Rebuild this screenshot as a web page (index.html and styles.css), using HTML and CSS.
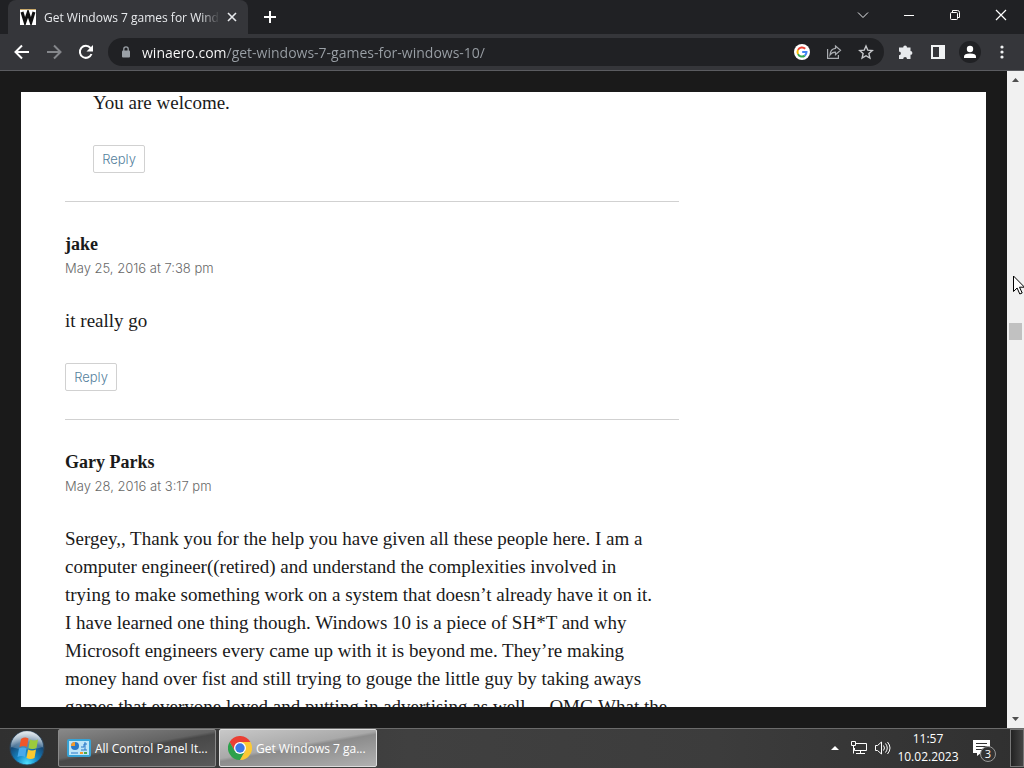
FILE: index.html
```html
<!DOCTYPE html>
<html lang="en">
<head>
    <meta charset="UTF-8">
    <meta name="viewport" content="width=device-width, initial-scale=1.0">
    <title>Get Windows 7 games for Windows 10</title>
    <link rel="stylesheet" href="styles.css">
</head>
<body>
    <!-- Tab strip -->
    <div class="tabstrip">
        <div class="tab">
            <svg class="favicon" width="16" height="16" viewBox="0 0 16 16">
                <rect width="16" height="16" fill="#fff"/>
                <path d="M2 3l3 10 3-9 3 9 3-10" fill="none" stroke="#111" stroke-width="3"/>
                <path d="M0 .5h16" stroke="#c9a96a"/>
            </svg>
            <span class="tab-title">Get Windows 7 games for Windows 10</span>
            <button class="icon-btn tab-close" aria-label="Close tab">
                <svg width="10" height="10" viewBox="0 0 10 10"><path d="M1 1l8 8M9 1l-8 8" stroke="#e8eaed" stroke-width="1.600"/></svg>
            </button>
        </div>
        <button class="icon-btn new-tab" aria-label="New tab">
            <svg width="12" height="12" viewBox="0 0 12 12"><path d="M6 0v12M0 6h12" stroke="#fff" stroke-width="2"/></svg>
        </button>
        <div class="window-controls">
            <button class="icon-btn" aria-label="Search tabs">
                <svg width="12" height="12" viewBox="0 0 12 12"><path d="M1 3.500l5 5 5-5" fill="none" stroke="#e8eaed"/></svg>
            </button>
            <button class="icon-btn" aria-label="Minimize">
                <svg width="12" height="12" viewBox="0 0 12 12"><path d="M1 6.500h10" stroke="#fff"/></svg>
            </button>
            <button class="icon-btn" aria-label="Restore">
                <svg width="12" height="12" viewBox="0 0 12 12" fill="none" stroke="#fff"><rect x="1.500" y="3.500" width="7" height="7" rx="1"/><path d="M3.500 3V1.500h5q2 0 2 2v5H9"/></svg>
            </button>
            <button class="icon-btn" aria-label="Close">
                <svg width="12" height="12" viewBox="0 0 12 12"><path d="M1 1l10 10M11 1L1 11" stroke="#fff" stroke-width="1.200"/></svg>
            </button>
        </div>
    </div>

    <!-- Toolbar -->
    <div class="toolbar">
        <div class="nav-buttons">
            <button class="icon-btn" aria-label="Back">
                <svg width="16" height="16" viewBox="0 0 16 16"><path d="M15 8H2M8 1.500L1.500 8 8 14.500" fill="none" stroke="#fff" stroke-width="2"/></svg>
            </button>
            <button class="icon-btn" aria-label="Forward">
                <svg width="16" height="16" viewBox="0 0 16 16"><path d="M1 8h13M8 1.500L14.500 8 8 14.500" fill="none" stroke="#85878b" stroke-width="2"/></svg>
            </button>
            <button class="icon-btn" aria-label="Reload">
                <svg width="16" height="16" viewBox="0 0 16 16"><path d="M13.500 10A6 6 0 1 1 12.500 4" fill="none" stroke="#fff" stroke-width="2"/><path d="M15 1v6.500H8.500z" fill="#fff"/></svg>
            </button>
        </div>
        <div class="omnibox">
            <svg width="10" height="12" viewBox="0 0 10 12"><rect x="1" y="4.500" width="8" height="7" rx="1" fill="#9aa0a6"/><path d="M2.800 5V3a2.200 2.200 0 0 1 4.400 0v2" fill="none" stroke="#9aa0a6" stroke-width="1.300"/></svg>
            <input class="url" type="text" aria-label="Address" value="winaero.com/get-windows-7-games-for-windows-10/">
            <button class="icon-btn" aria-label="Google">
                <svg width="16" height="16" viewBox="0 0 16 16" fill="none" stroke-width="2">
                    <circle cx="8" cy="8" r="8" fill="#fff"/>
                    <path d="M11.200 4.800A4.500 4.500 0 0 0 4 5.900" stroke="#ea4335"/>
                    <path d="M4 5.900a4.500 4.500 0 0 0 0 4.200" stroke="#fbbc05"/>
                    <path d="M4 10.100a4.500 4.500 0 0 0 6.800 1.500" stroke="#34a853"/>
                    <path d="M10.800 11.600A4.500 4.500 0 0 0 12.500 8H8.200" stroke="#4285f4"/>
                </svg>
            </button>
            <button class="icon-btn" aria-label="Share">
                <svg width="16" height="16" viewBox="0 0 16 16" fill="none" stroke="#a9acb0" stroke-width="1.200"><path d="M1.600 5v9.400h10.800V11M9.500 2l5 4.300-5 4.300V8.200Q6 8 4 11q.4-6 5.500-6.600z"/></svg>
            </button>
            <button class="icon-btn" aria-label="Bookmark this tab">
                <svg width="16" height="16" viewBox="0 0 16 16"><path d="M8 2l1.800 4.200 4.500.4-3.400 3 1 4.400L8 11.700 4.100 14l1-4.400-3.400-3 4.500-.4z" fill="none" stroke="#c8cacd" stroke-width="1.400"/></svg>
            </button>
        </div>
        <div class="tool-buttons">
            <button class="icon-btn" aria-label="Extensions">
                <svg width="16" height="16" viewBox="0 0 16 16"><path d="M5.200 3.500a1.900 1.900 0 0 1 3.800 0h3.500V7a1.900 1.900 0 0 1 0 3.800v4.200H9a1.900 1.900 0 0 0-3.800 0H1v-3.800a1.900 1.900 0 0 0 0-3.800V3.500z" fill="#e8eaed"/></svg>
            </button>
            <button class="icon-btn" aria-label="Side panel">
                <svg width="16" height="16" viewBox="0 0 16 16"><path d="M1 1h14v14H1zM3 3v10h6V3z" fill="#f1f3f4" fill-rule="evenodd"/></svg>
            </button>
            <button class="icon-btn" aria-label="Profile">
                <svg width="22" height="22" viewBox="0 0 22 22"><circle cx="11" cy="11" r="11" fill="#202124"/><circle cx="11" cy="8" r="3.200" fill="#fff"/><path d="M5 17v-1.500Q5 12.500 11 12.500t6 3V17z" fill="#fff"/></svg>
            </button>
            <button class="icon-btn" aria-label="Menu">
                <svg width="4" height="14" viewBox="0 0 4 14" fill="#f1f3f4"><circle cx="2" cy="2" r="1.600"/><circle cx="2" cy="7" r="1.600"/><circle cx="2" cy="12" r="1.600"/></svg>
            </button>
        </div>
    </div>

    <!-- Web page -->
    <div class="viewport">
        <main class="site">
            <div class="site-inner">
                <ol class="comment-list">
                    <li class="comment child">
                        <p>You are welcome.</p>
                        <a class="reply" href="#">Reply</a>
                    </li>
                    <li class="comment">
                        <b class="author">jake</b>
                        <a class="date" href="#">May 25, 2016 at 7:38 pm</a>
                        <p>it really go</p>
                        <a class="reply" href="#">Reply</a>
                    </li>
                    <li class="comment">
                        <b class="author">Gary Parks</b>
                        <a class="date" href="#">May 28, 2016 at 3:17 pm</a>
                        <p>Sergey,, Thank you for the help you have given all these people here. I am a<br>
                        computer engineer((retired) and understand the complexities involved in<br>
                        trying to make something work on a system that doesn’t already have it on it.<br>
                        I have learned one thing though. Windows 10 is a piece of SH*T and why<br>
                        Microsoft engineers every came up with it is beyond me. They’re making<br>
                        money hand over fist and still trying to gouge the little guy by taking aways<br>
                        games that everyone loved and putting in advertising as well… OMG What the</p>
                    </li>
                </ol>
            </div>
        </main>
        <div class="scrollbar">
            <svg width="7" height="4" viewBox="0 0 7 4"><path d="M0 4l3.500-4L7 4z" fill="#505050"/></svg>
            <div class="thumb"></div>
            <svg width="7" height="4" viewBox="0 0 7 4"><path d="M0 0l3.500 4L7 0z" fill="#505050"/></svg>
        </div>
    </div>

    <!-- Taskbar -->
    <div class="taskbar">
        <button class="start" aria-label="Start">
            <svg width="36" height="36" viewBox="0 0 36 36">
                <defs>
                    <radialGradient id="orb" cx="50%" cy="95%" r="90%">
                        <stop offset="0" stop-color="#4fe0ff"/>
                        <stop offset=".35" stop-color="#1585c4"/>
                        <stop offset=".7" stop-color="#164a78"/>
                        <stop offset="1" stop-color="#9fb4c4"/>
                    </radialGradient>
                    <linearGradient id="gloss" x2="0" y2="1">
                        <stop offset="0" stop-color="#fff" stop-opacity=".7"/>
                        <stop offset="1" stop-color="#fff" stop-opacity=".15"/>
                    </linearGradient>
                </defs>
                <circle cx="18" cy="18" r="17" fill="url(#orb)" stroke="#2b4257"/>
                <path d="M2 17a16 16 0 0 1 32 0q-16 5-32 0z" fill="url(#gloss)"/>
                <path d="M12 9q4-2.500 7.500-.5L18 17q-3.500-2-7.500 0z" fill="#f0562b"/>
                <path d="M21 9.500q4 2 8 0L27.500 18q-4 2-8 0z" fill="#9ccb3c"/>
                <path d="M10 18.500q4-2 7.500 0L16 27q-3.500-2-7.500 0z" fill="#49a9ea"/>
                <path d="M19 19.500q4 2 8 0L25.500 28q-4 2-8 0z" fill="#fdc92e"/>
            </svg>
        </button>
        <button class="task">
            <svg width="24" height="24" viewBox="0 0 24 24">
                <rect x="1" y="4" width="22" height="16" rx="1" fill="#bfe6f8" stroke="#38a3d6" stroke-width="2"/>
                <circle cx="8" cy="10" r="4" fill="#2a78c8"/>
                <path d="M8 10V6a4 4 0 0 0-4 4z" fill="#f39a2e"/>
                <path d="M14 11h3v-3h3M14 14h6M18 6v8M4 17h7" fill="none" stroke="#2a78c8"/>
                <path d="M13 17h3" stroke="#f39a2e" stroke-width="2"/>
                <path d="M17 17h3" stroke="#4ba84e" stroke-width="2"/>
            </svg>
            <span>All Control Panel It...</span>
        </button>
        <button class="task active">
            <svg width="24" height="24" viewBox="0 0 24 24">
                <path d="M12 6h10.400A12 12 0 0 0 1.600 6L6.800 15z" fill="#ea3f33"/>
                <path d="M1.600 6A12 12 0 0 0 12 24l5.200-9H6.800z" fill="#2da14c"/>
                <path d="M12 24A12 12 0 0 0 22.400 6H12l5.200 9z" fill="#fcc934"/>
                <circle cx="12" cy="12" r="6" fill="#fff"/>
                <circle cx="12" cy="12" r="4.700" fill="#3b78e7"/>
            </svg>
            <span>Get Windows 7 ga...</span>
        </button>
        <div class="tray">
            <button class="icon-btn" aria-label="Show hidden icons">
                <svg width="8" height="4" viewBox="0 0 8 4"><path d="M0 4l4-4 4 4z" fill="#fff"/></svg>
            </button>
            <button class="icon-btn" aria-label="Network">
                <svg width="18" height="16" viewBox="0 0 18 16" fill="none" stroke="#fff"><path d="M6 3.500h10.500v7H4.500V8M10.500 10.500v3M6 13.500h9M1.500 1.500h4v4h-4zM3.500 6v7.500"/></svg>
            </button>
            <button class="icon-btn" aria-label="Volume">
                <svg width="18" height="16" viewBox="0 0 18 16" fill="none" stroke="#fff"><path d="M1.500 5.500h2l4-3.500v12l-4-3.500h-2zM9.500 5.500q2 2.500 0 5M11.500 3.500q3.500 4.500 0 9M13.500 2q5 6 0 12"/></svg>
            </button>
            <div class="clock">
                <time>11:57</time>
                <time>10.02.2023</time>
            </div>
            <button class="icon-btn notify" aria-label="3 notifications">
                <svg width="17" height="16" viewBox="0 0 17 16"><path d="M0 0h17v13H8l-4 3v-3H0z" fill="#fff"/><path d="M3 3.500h11M3 6.500h11M3 9.500h7" stroke="#333"/></svg>
                <span class="badge">3</span>
            </button>
            <button class="show-desktop" aria-label="Show desktop"></button>
        </div>
    </div>

    <svg class="cursor" width="11" height="20" viewBox="0 0 11 20"><path d="M.5 1v15.500l3.600-3.500 2.700 6 2.400-1-2.700-5.800h5z" fill="#fff" stroke="#000"/></svg>
</body>
</html>
```
FILE: styles.css
```css
/* General */
* {
    box-sizing: border-box;
}

body {
    margin: 0;
    height: 100vh;
    display: flex;
    flex-direction: column;
    overflow: hidden;
    font-family: "Open Sans", "Noto Sans", sans-serif;
    font-size: 12px;
    background-color: #1a1a1a;
    color: #1a1a1a;
}

button {
    font: inherit;
    border: none;
    padding: 0;
    color: white;
    cursor: pointer;
}

svg {
    display: block;
    flex: none;
}

.icon-btn {
    display: flex;
    align-items: center;
    justify-content: center;
    background: none;
}

/* Tab strip */
.tabstrip {
    display: flex;
    height: 34px;
    flex: none;
    padding-left: 8px;
    background-color: #202124;
}

.tab {
    display: flex;
    align-items: center;
    width: 240px;
    padding: 0 10px 0 12px;
    border-radius: 8px 8px 0 0;
    background-color: #35363a;
    color: #e8eaed;
}

.tab-title {
    flex: 1;
    margin-left: 8px;
    overflow: hidden;
    white-space: nowrap;
    -webkit-mask-image: linear-gradient(to left, transparent, black 20px);
    mask-image: linear-gradient(to left, transparent, black 20px);
}

.tab-close {
    width: 12px;
    height: 16px;
    margin-left: 6px;
}

.new-tab {
    width: 44px;
}

.window-controls {
    display: flex;
    margin-left: auto;
}

.window-controls .icon-btn {
    width: 46px;
    height: 29px;
}

/* Toolbar */
.toolbar {
    display: flex;
    align-items: center;
    height: 37px;
    flex: none;
    background-color: #35363a;
    border-bottom: 1px solid #5b5c60;
}

.nav-buttons {
    display: flex;
    gap: 16px;
    padding: 0 14px;
}

.omnibox {
    display: flex;
    flex: 1;
    align-items: center;
    gap: 16px;
    height: 28px;
    padding: 0 10px 0 13px;
    border-radius: 14px;
    background-color: #202124;
}

.url {
    flex: 1;
    min-width: 0;
    margin-left: -5px;
    padding: 0;
    border: none;
    outline: none;
    font: inherit;
    font-size: 14px;
    background: linear-gradient(to right, #fff 84px, #9aa0a6 84px);
    -webkit-background-clip: text;
    background-clip: text;
    -webkit-text-fill-color: transparent;
}

.tool-buttons {
    display: flex;
    align-items: center;
    padding: 0 6px;
}

.tool-buttons .icon-btn {
    width: 32px;
}

/* Web page */
.viewport {
    display: flex;
    flex: 1;
    min-height: 0;
}

.site {
    flex: 1;
    min-width: 0;
    padding: 21px;
}

.site-inner {
    height: 100%;
    padding: 0 44px;
    overflow: hidden;
    background-color: white;
}

.comment-list {
    max-width: 614px;
    margin: -3px 0 0;
    padding: 0;
    list-style: none;
    font-family: "Liberation Serif", serif;
    font-size: 19px;
    line-height: 28px;
}

.comment {
    padding-bottom: 28px;
}

.comment + .comment {
    padding-top: 28px;
    border-top: 1px solid #d1d1d1;
}

.child {
    padding-left: 28px;
}

.comment p {
    margin: 0 0 28px;
    white-space: nowrap;
}

.author {
    display: block;
    font-size: 18px;
}

.date {
    display: block;
    margin-bottom: 28px;
    font-family: Inter, sans-serif;
    font-size: 13px;
    font-weight: 300;
    line-height: 21px;
    color: #686868;
    text-decoration: none;
}

.reply {
    display: block;
    width: 52px;
    border: 1px solid #d1d1d1;
    border-radius: 2px;
    font-family: Inter, sans-serif;
    font-size: 13px;
    font-weight: 300;
    line-height: 26px;
    text-align: center;
    color: #557f9d;
    text-decoration: none;
}

.reply:hover {
    border-color: #007acc;
}

/* Scrollbar */
.scrollbar {
    display: flex;
    flex-direction: column;
    align-items: center;
    width: 17px;
    padding: 7px 0;
    background-color: #f1f1f1;
}

.thumb {
    width: 13px;
    height: 17px;
    margin: 241px 0 auto;
    background-color: #c1c1c1;
}

/* Taskbar */
.taskbar {
    display: flex;
    height: 40px;
    flex: none;
    padding-bottom: 1px;
    border-top: 1px solid #6b6b6b;
    background: linear-gradient(to right, #303030, #404040 40%, #3c3c3c 70%, #303030);
    color: white;
}

.start {
    display: flex;
    align-items: center;
    width: 58px;
    padding-left: 9px;
    background: none;
}

.task {
    display: flex;
    align-items: center;
    width: 158px;
    margin-right: 3px;
    padding: 0 8px;
    gap: 4px;
    border: 1px solid #8a8a8a;
    border-radius: 2px;
    background: linear-gradient(170deg, #888 0%, #636363 45%, #484848 50%, #5a5a5a 100%);
    white-space: nowrap;
}

.task.active {
    border-color: #ddd;
    background: linear-gradient(170deg, #c8c8c8 0%, #a9a9a9 45%, #8c8c8c 50%, #b0b0b0 100%);
}

.tray {
    display: flex;
    align-items: center;
    margin-left: auto;
}

.tray .icon-btn {
    width: 24px;
}

.clock {
    width: 62px;
    margin: 0 14px 0 2px;
    text-align: center;
}

.clock time {
    display: block;
    line-height: 18px;
}

.tray .notify {
    position: relative;
    width: 17px;
    margin-right: 20px;
}

.badge {
    position: absolute;
    left: 7px;
    top: 6px;
    width: 16px;
    height: 16px;
    border: 1px solid #999;
    border-radius: 8px;
    background-color: #333;
    font-size: 11px;
    line-height: 14px;
}

.show-desktop {
    width: 14px;
    height: 38px;
    border: 1px solid #777;
    background: linear-gradient(to right, #222, #444);
}

/* Mouse pointer */
.cursor {
    position: absolute;
    right: 0;
    top: 275px;
}
```
